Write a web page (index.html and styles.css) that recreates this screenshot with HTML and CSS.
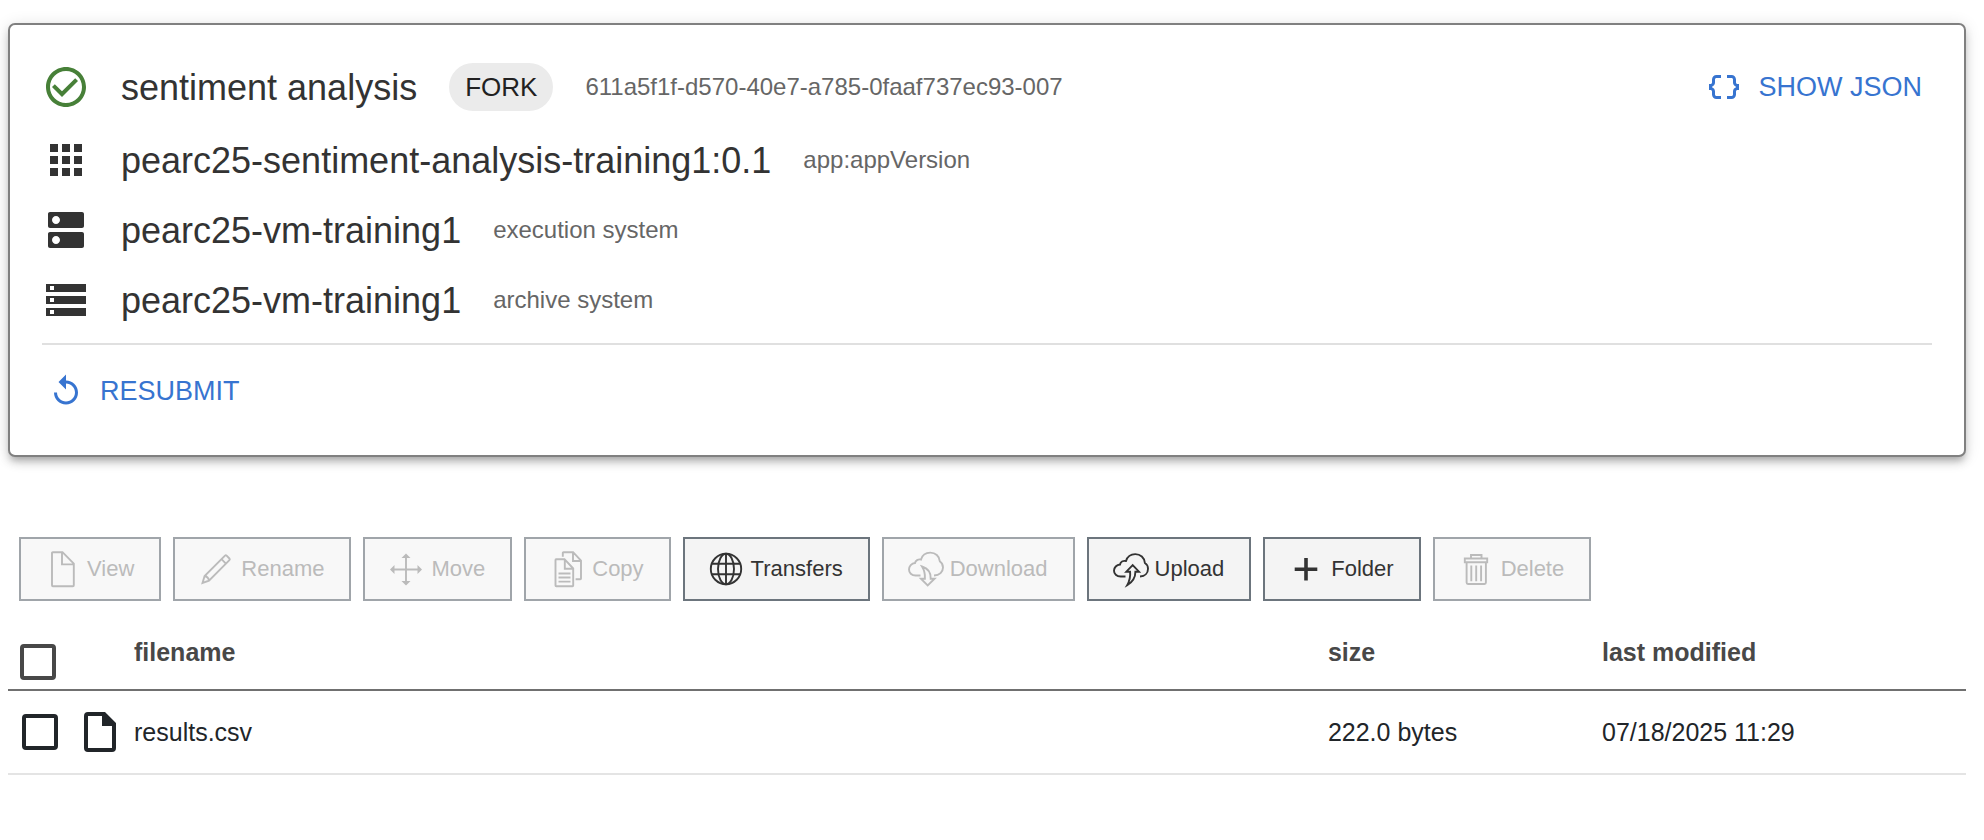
FILE: index.html
```html
<!DOCTYPE html>
<html lang="en">
<head>
<meta charset="utf-8">
<title>sentiment analysis</title>
<link rel="stylesheet" href="styles.css">
</head>
<body>
<main>
  <section class="card">
    <div class="row row-main">
      <svg class="icon ok" viewBox="0 0 24 24" aria-hidden="true"><path d="M16.59 7.58 10 14.17l-3.59-3.58L5 12l5 5 8-8zM12 2C6.48 2 2 6.48 2 12s4.48 10 10 10 10-4.48 10-10S17.52 2 12 2zm0 18c-4.42 0-8-3.58-8-8s3.58-8 8-8 8 3.58 8 8-3.58 8-8 8z"/></svg>
      <div class="row-text">
        <h1 class="title">sentiment analysis</h1>
        <span class="chip">FORK</span>
        <span class="note">611a5f1f-d570-40e7-a785-0faaf737ec93-007</span>
      </div>
      <button type="button" class="link-button">
        <svg class="link-icon" viewBox="0 0 24 24" aria-hidden="true"><path d="M4 7v2c0 .55-.45 1-1 1H2v4h1c.55 0 1 .45 1 1v2c0 1.65 1.35 3 3 3h3v-2H7c-.55 0-1-.45-1-1v-2c0-1.3-.84-2.42-2-2.83v-.34C5.16 11.42 6 10.3 6 9V7c0-.55.45-1 1-1h3V4H7C5.35 4 4 5.35 4 7zM21 10c-.55 0-1-.45-1-1V7c0-1.65-1.35-3-3-3h-3v2h3c.55 0 1 .45 1 1v2c0 1.3.84 2.42 2 2.83v.34c-1.16.41-2 1.52-2 2.83v2c0 .55-.45 1-1 1h-3v2h3c1.65 0 3-1.35 3-3v-2c0-.55.45-1 1-1h1v-4h-1z"/></svg>
        SHOW JSON
      </button>
    </div>
    <div class="row">
      <svg class="icon" viewBox="0 0 24 24" aria-hidden="true"><path d="M4 8h4V4H4v4zm6 12h4v-4h-4v4zm-6 0h4v-4H4v4zm0-6h4v-4H4v4zm6 0h4v-4h-4v4zm6-10v4h4V4h-4zm-6 4h4V4h-4v4zm6 6h4v-4h-4v4zm0 6h4v-4h-4v4z"/></svg>
      <div class="row-text">
        <h2 class="title">pearc25-sentiment-analysis-training1:0.1</h2>
        <span class="note">app:appVersion</span>
      </div>
    </div>
    <div class="row">
      <svg class="icon" viewBox="0 0 24 24" aria-hidden="true"><path d="M20 13H4c-.55 0-1 .45-1 1v6c0 .55.45 1 1 1h16c.55 0 1-.45 1-1v-6c0-.55-.45-1-1-1zM7 19c-1.1 0-2-.9-2-2s.9-2 2-2 2 .9 2 2-.9 2-2 2zM20 3H4c-.55 0-1 .45-1 1v6c0 .55.45 1 1 1h16c.55 0 1-.45 1-1V4c0-.55-.45-1-1-1zM7 9c-1.1 0-2-.9-2-2s.9-2 2-2 2 .9 2 2-.9 2-2 2z"/></svg>
      <div class="row-text">
        <h2 class="title">pearc25-vm-training1</h2>
        <span class="note">execution system</span>
      </div>
    </div>
    <div class="row">
      <svg class="icon" viewBox="0 0 24 24" aria-hidden="true"><path d="M2 20h20v-4H2v4zm2-3h2v2H4v-2zM2 4v4h20V4H2zm4 3H4V5h2v2zm-4 7h20v-4H2v4zm2-3h2v2H4v-2z"/></svg>
      <div class="row-text">
        <h2 class="title">pearc25-vm-training1</h2>
        <span class="note">archive system</span>
      </div>
    </div>
    <div class="card-actions">
      <button type="button" class="link-button">
        <svg class="link-icon" viewBox="0 0 24 24" aria-hidden="true"><path d="M12 5V1L7 6l5 5V7c3.31 0 6 2.69 6 6s-2.69 6-6 6-6-2.69-6-6H4c0 4.42 3.58 8 8 8s8-3.58 8-8-3.58-8-8-8z"/></svg>
        RESUBMIT
      </button>
    </div>
  </section>

  <div class="toolbar" role="toolbar" aria-label="File actions">
    <button type="button" class="tool" disabled>
      <svg viewBox="0 0 32 36" aria-hidden="true"><path d="M6.900 1.200h9.600l11.300 11.500v21.600q0 .9-.9.9H6.900q-.9 0-.9-.9V2.100q0-.9.9-.9zM16 1.200v12.200h11.800"/></svg>
      View
    </button>
    <button type="button" class="tool" disabled>
      <svg viewBox="0 0 32 36" aria-hidden="true"><path d="M2.500 32 4.600 25 25 4.700q.8-.8 1.600 0l2.800 2.800q.8.8 0 1.600L9 29.600zM21.500 8.200l4.400 4.400M4.600 25q3.600.6 4.400 4.600"/></svg>
      Rename
    </button>
    <button type="button" class="tool" disabled>
      <svg viewBox="0 0 32 36" aria-hidden="true"><path d="M16 5v27M3 18.500h26"/><path class="solid" d="m16 2.500 4.500 4.500h-9zM16 34.500l-4.500-4.500h9zM0 18.500 4.500 14v9zM32 18.500 27.500 23v-9z"/></svg>
      Move
    </button>
    <button type="button" class="tool" disabled>
      <svg viewBox="0 0 32 36" aria-hidden="true"><path d="M5 8.200h8.500l8.700 9.300v17q0 .7-.7.700H5.200q-.7 0-.7-.7V9q0-.8.5-.8zM13.800 8.200v9.500h8.400M7.500 22.500h12M7.500 26.500h12M7.500 30.600h12M11.800 5.700V1.900q0-.7.7-.7h9.600l7.900 8.500v17.800q0 .7-.7.700h-4.700M22 1.200v8.800h8"/></svg>
      Copy
    </button>
    <button type="button" class="tool">
      <svg viewBox="0 0 32 36" aria-hidden="true"><circle cx="16" cy="18" r="15.200"/><ellipse cx="16" cy="18" rx="8" ry="15.200"/><path d="M16 2.800v30.400M2 12.700h28M2 23.300h28"/></svg>
      Transfers
    </button>
    <button type="button" class="tool" disabled>
      <svg viewBox="0 0 32 36" aria-hidden="true"><path d="M11.500 24.500H6.700C2.500 24.500 0 21.700 0 18.500c0-3.300 2.600-6.300 6-6.500.5-2.400 3-4.200 6-3.500C13.300 4 17 1.600 21.300 1.600c5 0 9.200 3.600 9.600 8.900 2 1.200 3.100 3.200 3.100 6 0 4.300-3.500 7.900-9 8M13 15.500c2.300 3.600 3.200 7.600 2.900 12.200h-4L18.700 34.500l6.900-6.800h-3.900c.2-6-2.700-10.400-8.700-12.200z"/></svg>
      Download
    </button>
    <button type="button" class="tool">
      <svg viewBox="0 0 32 36" aria-hidden="true"><path d="M11.500 25.500H6.700C2.500 25.500 0 22.700 0 19.700c0-3.200 2.600-6 6-6.200.5-2.400 3-4.100 6-3.500 1.300-4.300 5-6.900 9.300-6.900 5 0 9.200 3.600 9.600 8.900 2 1.200 3.100 3.200 3.100 5.700 0 4.200-3 7.600-8 7.800M18.700 14.200l6.300 6.500h-3.600c0 5.500-2.400 10-8.200 13.500 2.400-4.300 3.400-8.500 2.900-13.500h-3.800z"/></svg>
      Upload
    </button>
    <button type="button" class="tool">
      <svg class="plus" viewBox="0 0 32 36" aria-hidden="true"><path d="M16 7v22.500M4.700 18.300h22.600"/></svg>
      Folder
    </button>
    <button type="button" class="tool" disabled>
      <svg viewBox="0 0 32 36" aria-hidden="true"><path d="M4.800 7.500h22.400v3.700H4.800zM11 7.500V4h10.500v3.500M6.600 11.200v20.400q0 1.400 1.400 1.400h16.500q1.400 0 1.400-1.400V11.200M11.300 14.500v15.800M16.200 14.500v15.800M21.100 14.500v15.800"/></svg>
      Delete
    </button>
  </div>

  <table class="files">
    <thead>
      <tr>
        <th class="col-check"><input type="checkbox" class="check" aria-label="Select all files"></th>
        <th class="col-icon"></th>
        <th>filename</th>
        <th class="col-size">size</th>
        <th class="col-date">last modified</th>
      </tr>
    </thead>
    <tbody>
      <tr>
        <td class="col-check"><input type="checkbox" class="check" aria-label="Select results.csv"></td>
        <td class="col-icon"><svg class="file-icon" viewBox="0 0 32 40" aria-hidden="true"><path d="M4 0h17l11 11v25q0 4-4 4H4q-4 0-4-4V4q0-4 4-4zm0 4v32h24V14H18V4z"/></svg></td>
        <td>results.csv</td>
        <td>222.0 bytes</td>
        <td>07/18/2025 11:29</td>
      </tr>
    </tbody>
  </table>
</main>
</body>
</html>
```

FILE: styles.css
```css
* {
  box-sizing: border-box;
}

body {
  margin: 0;
  padding: 23px 18px 0 8px;
  background: #fff;
  color: #333;
  font-family: "Liberation Sans", Arial, sans-serif;
}

button {
  font-family: inherit;
}

.card {
  padding: 24px 32px 32px;
  border: 2px solid #808080;
  border-radius: 7px;
  background: #fff;
  box-shadow:
    0 6px 6px -4px rgba(0, 0, 0, 0.2),
    0 6px 8px 0 rgba(0, 0, 0, 0.14),
    0 2px 16px 0 rgba(0, 0, 0, 0.12);
}

.row {
  display: flex;
  align-items: center;
  gap: 31px;
  min-height: 70px;
}

.row-main {
  min-height: 76px;
}

.icon {
  flex: none;
  width: 48px;
  height: 48px;
  fill: #333;
}

.ok {
  fill: #478038;
}

.row-text {
  flex: 1;
  display: flex;
  align-items: center;
  gap: 32px;
}

.title {
  margin: 0;
  padding-top: 2px;
  font-size: 36px;
  font-weight: 400;
  line-height: 48px;
}

.chip {
  padding: 0 16px;
  border-radius: 24px;
  background: #ebebeb;
  color: #212121;
  font-size: 26px;
  line-height: 48px;
}

.note {
  color: #666;
  font-size: 24px;
  line-height: 32px;
}

.link-button {
  display: flex;
  align-items: center;
  gap: 16px;
  padding: 6px 10px 6px 6px;
  border: 0;
  background: none;
  color: #3774d0;
  font-size: 27px;
  line-height: 36px;
}

.link-icon {
  width: 36px;
  height: 36px;
  fill: currentColor;
}

.card-actions {
  margin-top: 8px;
  padding: 22px 0 8px;
  border-top: 2px solid #e0e0e0;
}

.toolbar {
  display: flex;
  flex-wrap: wrap;
  gap: 12px;
  margin: 80px 0 0 11px;
}

.tool {
  display: flex;
  align-items: center;
  gap: 9px;
  height: 64px;
  padding: 0 25px;
  border: 2px solid #6c757d;
  background: #f4f4f4;
  color: #333;
  font-size: 22px;
}

.tool:disabled {
  border-color: #a0a5aa;
  background: #f8f8f8;
  color: #bbb;
}

.tool svg {
  flex: none;
  width: 32px;
  height: 36px;
  overflow: visible;
  fill: none;
  stroke: currentColor;
  stroke-width: 1.9;
}

.tool .solid {
  fill: currentColor;
  stroke: none;
}

.tool .plus {
  stroke-width: 3.6;
}

.files {
  width: 100%;
  margin-top: 16px;
  border-collapse: separate;
  border-spacing: 0;
  table-layout: fixed;
  font-size: 25px;
  line-height: 30px;
  text-align: left;
}

.files th {
  height: 74px;
  padding: 20px 0 0;
  border-bottom: 2px solid #707070;
  color: #484848;
  vertical-align: top;
}

.files td {
  height: 84px;
  padding: 0;
  border-bottom: 2px solid #e4e4e4;
  color: #212529;
  vertical-align: middle;
}

.files .col-check {
  width: 76px;
  padding-left: 14px;
}

.files th.col-check {
  padding: 27px 0 0 12px;
}

.col-icon {
  width: 50px;
}

.col-size {
  width: 14%;
}

.col-date {
  width: 364px;
}

.check {
  display: block;
  appearance: none;
  width: 36px;
  height: 36px;
  margin: 0;
  border: 4px solid currentColor;
  border-radius: 4px;
  color: inherit;
}

.file-icon {
  display: block;
  width: 32px;
  height: 40px;
  fill: currentColor;
}
```
